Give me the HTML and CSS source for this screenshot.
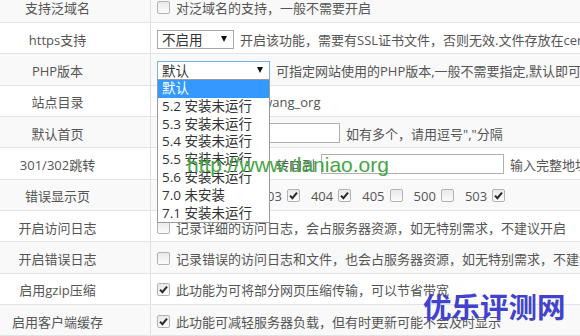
FILE: index.html
```html
<!DOCTYPE html>
<html lang="zh-CN">
<head>
<meta charset="utf-8">
<title>网站配置</title>
<link rel="stylesheet" href="styles.css">
</head>
<body>
<div class="page">
  <div class="tbl">
    <div class="row odd">
      <div class="lbl">支持泛域名</div>
      <div class="val"><span class="cb"></span><span class="txt">对泛域名的支持，一般不需要开启</span></div>
    </div>
    <div class="row">
      <div class="lbl">https支持</div>
      <div class="val"><span class="sel sel-ssl">不启用<i class="arr"></i></span><span class="txt">开启该功能，需要有SSL证书文件，否则无效.文件存放在cert目录</span></div>
    </div>
    <div class="row odd">
      <div class="lbl">PHP版本</div>
      <div class="val">
        <span class="sel sel-php">默认<i class="arr"></i>
          <ul class="menu">
            <li class="hl">默认</li>
            <li>5.2 安装未运行</li>
            <li>5.3 安装未运行</li>
            <li>5.4 安装未运行</li>
            <li>5.5 安装未运行</li>
            <li>5.6 安装未运行</li>
            <li>7.0 未安装</li>
            <li>7.1 安装未运行</li>
          </ul>
        </span>
        <span class="txt">可指定网站使用的PHP版本,一般不需要指定,默认即可</span>
      </div>
    </div>
    <div class="row">
      <div class="lbl">站点目录</div>
      <div class="val"><span class="txt">/home/wwwroot/wang_org</span></div>
    </div>
    <div class="row odd">
      <div class="lbl">默认首页</div>
      <div class="val"><span class="inp inp-idx"></span><span class="txt">如有多个，请用逗号","分隔</span></div>
    </div>
    <div class="row">
      <div class="lbl">301/302跳转</div>
      <div class="val"><span class="sel sel-rd">不启用<i class="arr"></i></span><span class="txt">转向到</span><span class="inp inp-url"></span><span class="txt">输入完整地址，必须带http://</span></div>
    </div>
    <div class="row odd">
      <div class="lbl">错误显示页</div>
      <div class="val codes">
        <span class="grp"><span>400</span><span class="cb on"><svg viewBox="0 0 13 13"><path d="M3 6.6 L5.4 9.2 L10 3.6"/></svg></span></span>
        <span class="grp"><span>401</span><span class="cb on"><svg viewBox="0 0 13 13"><path d="M3 6.6 L5.4 9.2 L10 3.6"/></svg></span></span>
        <span class="grp"><span>403</span><span class="cb on"><svg viewBox="0 0 13 13"><path d="M3 6.6 L5.4 9.2 L10 3.6"/></svg></span></span>
        <span class="grp"><span>404</span><span class="cb on"><svg viewBox="0 0 13 13"><path d="M3 6.6 L5.4 9.2 L10 3.6"/></svg></span></span>
        <span class="grp"><span>405</span><span class="cb"></span></span>
        <span class="grp"><span>500</span><span class="cb"></span></span>
        <span class="grp"><span>503</span><span class="cb on"><svg viewBox="0 0 13 13"><path d="M3 6.6 L5.4 9.2 L10 3.6"/></svg></span></span>
      </div>
    </div>
    <div class="row">
      <div class="lbl">开启访问日志</div>
      <div class="val"><span class="cb"></span><span class="txt">记录详细的访问日志，会占服务器资源，如无特别需求，不建议开启</span></div>
    </div>
    <div class="row odd">
      <div class="lbl">开启错误日志</div>
      <div class="val"><span class="cb"></span><span class="txt">记录错误的访问日志和文件，也会占服务器资源，如无特别需求，不建议开启</span></div>
    </div>
    <div class="row">
      <div class="lbl">启用gzip压缩</div>
      <div class="val"><span class="cb on"><svg viewBox="0 0 13 13"><path d="M3 6.6 L5.4 9.2 L10 3.6"/></svg></span><span class="txt">此功能为可将部分网页压缩传输，可以节省带宽</span></div>
    </div>
    <div class="row odd">
      <div class="lbl">启用客户端缓存</div>
      <div class="val"><span class="cb on"><svg viewBox="0 0 13 13"><path d="M3 6.6 L5.4 9.2 L10 3.6"/></svg></span><span class="txt">此功能可减轻服务器负载，但有时更新可能不会及时显示</span></div>
    </div>
  </div>
  <div class="wm-url">http://www.daniao.org</div>
  <div class="wm-logo">优乐评测网</div>
</div>
</body>
</html>
```

FILE: styles.css
```css
* { box-sizing: border-box; margin: 0; padding: 0; }
html, body { width: 580px; height: 336px; overflow: hidden; background: #fff; }
body {
  font-family: "Open Sans", "Noto Sans CJK SC", sans-serif;
  font-size: 13px;
  color: #555;
}
.page { position: relative; width: 580px; height: 336px; overflow: hidden; }
.tbl { margin-top: -8.33px; width: 580px; }
.row {
  display: grid;
  grid-template-columns: 151px 1fr;
  height: 31.33px;
  border-bottom: 1px solid #e4e4e4;
}
.row.odd { background: #f9f9f9; }
.lbl {
  display: flex;
  align-items: center;
  justify-content: center;
  padding: 2px 35px 0 0;
  border-right: 1px solid #e0e0e0;
  color: #555;
  white-space: nowrap;
}
.val {
  display: flex;
  align-items: center;
  gap: 6px;
  padding: 2px 0 0 6px;
  white-space: nowrap;
}
.txt { flex: none; }
.cb {
  position: relative;
  flex: none;
  width: 13px;
  height: 13px;
  border: 1px solid #b3b3b3;
  border-radius: 2px;
  background: linear-gradient(#e9e9e9, #fcfcfc);
}
.cb svg { position: absolute; left: -1px; top: -1px; width: 13px; height: 13px; }
.cb svg path { fill: none; stroke: #2a2a2a; stroke-width: 2; }
.sel {
  position: relative;
  flex: none;
  display: flex;
  align-items: center;
  justify-content: space-between;
  height: 19px;
  padding: 0 6px 0 4px;
  border: 1px solid #a6a6a6;
  background: #fff;
  color: #333;
  font-size: 13.5px;
}
.sel-ssl { width: 77px; }
.sel-php { width: 113px; border-color: #7eaede; }
.sel-rd { width: 113px; }
.arr {
  width: 0;
  height: 0;
  border-left: 3.5px solid transparent;
  border-right: 3.5px solid transparent;
  border-top: 6px solid #111;
}
.menu {
  position: absolute;
  top: 100%;
  left: -1px;
  right: -1px;
  list-style: none;
  background: #fff;
  border: 1px solid #9a9a9a;
  z-index: 5;
}
.menu li {
  height: 17.8px;
  line-height: 17.8px;
  padding-left: 4px;
  color: #333;
  font-size: 13.5px;
}
.menu li.hl { background: #3399ff; color: #fff; }
.inp {
  flex: none;
  display: block;
  height: 20px;
  border: 1px solid #b0b0b0;
  background: #fff;
}
.inp-idx { width: 183px; }
.inp-url { width: 183px; }
.codes { gap: 11px; }
.grp { display: flex; align-items: center; gap: 5px; flex: none; }
.wm-url {
  position: absolute;
  left: 187px;
  top: 154px;
  font: 21px/21px "Liberation Sans", Arial, sans-serif;
  color: #46a646;
  white-space: nowrap;
  z-index: 10;
}
.wm-logo {
  position: absolute;
  left: 423px;
  top: 291px;
  font: 700 28.5px/29px "Noto Sans CJK SC", sans-serif;
  color: #4242cc;
  white-space: nowrap;
  z-index: 10;
}
```
